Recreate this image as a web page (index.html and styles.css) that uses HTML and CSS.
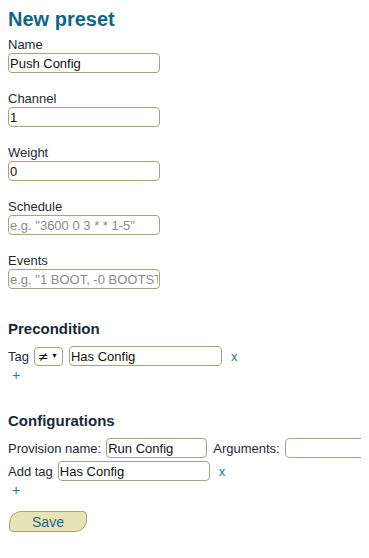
FILE: index.html
```html
<!DOCTYPE html>
<html lang="en">
<head>
  <meta charset="UTF-8">
  <meta name="viewport" content="width=device-width, initial-scale=1.0">
  <title>New preset</title>
  <link rel="stylesheet" href="styles.css">
</head>
<body>

  <h1 class="title">New preset</h1>

  <form class="preset-form">
    <div class="field">
      <label for="name">Name</label>
      <input type="text" id="name" class="text-input" value="Push Config">
    </div>
    <div class="field">
      <label for="channel">Channel</label>
      <input type="text" id="channel" class="text-input" value="1">
    </div>
    <div class="field">
      <label for="weight">Weight</label>
      <input type="text" id="weight" class="text-input" value="0">
    </div>
    <div class="field">
      <label for="schedule">Schedule</label>
      <input type="text" id="schedule" class="text-input" placeholder='e.g. "3600 0 3 * * 1-5"'>
    </div>
    <div class="field">
      <label for="events">Events</label>
      <input type="text" id="events" class="text-input" placeholder='e.g. "1 BOOT, -0 BOOTSTRAP"'>
    </div>

    <!-- Precondition -->
    <h3 class="section-title">Precondition</h3>
    <div class="row">
      <span>Tag</span>
      <span class="select-wrap">
        <select class="op-select">
          <option>&ne;</option>
          <option>=</option>
        </select>
      </span>
      <input type="text" class="text-input tag-input" value="Has Config">
      <a class="link remove">x</a>
    </div>
    <a class="link add">+</a>

    <!-- Configurations -->
    <h3 class="section-title config-title">Configurations</h3>
    <div class="row">
      <span>Provision name:</span>
      <input type="text" class="text-input provision-input" value="Run Config">
      <span>Arguments:</span>
      <input type="text" class="text-input args-input">
    </div>
    <div class="row add-tag-row">
      <span>Add tag</span>
      <input type="text" class="text-input tag-input" value="Has Config">
      <a class="link remove">x</a>
    </div>
    <a class="link add">+</a>

    <button type="button" class="save-btn">Save</button>
  </form>

</body>
</html>
```

FILE: styles.css
```css
html {
  overflow: hidden;
}
body {
  font-family: "Liberation Sans", Arial, sans-serif;
  font-size: 13px;
  color: #1e2a30;
  background-color: #fff;
  margin: 8px;
}
.title {
  font-size: 20px;
  line-height: 23px;
  color: #0f6688;
  margin: 0 0 6px 0;
}
.field {
  margin-bottom: 18px;
}
.field label {
  display: block;
  line-height: 16px;
}
.text-input {
  box-sizing: border-box;
  width: 152px;
  height: 20px;
  padding: 0 1px;
  border: 1px solid #a8a282;
  border-radius: 4px;
  font-family: "Liberation Sans", Arial, sans-serif;
  font-size: 13px;
  color: #111;
  background-color: #fff;
  display: block;
}
.text-input::placeholder {
  color: #8a8a8a;
}
.section-title {
  font-size: 15px;
  line-height: 18px;
  color: #1a2a33;
  margin: 31px 0 8px 0;
}
.config-title {
  margin-top: 29px;
}
.row {
  display: flex;
  align-items: center;
  white-space: nowrap;
  height: 20px;
}
.row .text-input {
  flex-shrink: 0;
}
.select-wrap {
  position: relative;
  margin-left: 5px;
}
.op-select {
  appearance: none;
  -webkit-appearance: none;
  box-sizing: border-box;
  width: 29px;
  height: 19px;
  padding: 0 0 0 3px;
  border: 1px solid #a8a282;
  border-radius: 4px;
  background-color: #fff;
  font-family: "DejaVu Sans", "Liberation Sans", sans-serif;
  font-size: 13px;
  color: #111;
  display: block;
}
.select-wrap::after {
  content: "\25BC";
  position: absolute;
  right: 5px;
  top: 5px;
  font-size: 7px;
  color: #111;
  pointer-events: none;
}
.tag-input {
  margin-left: 6px;
  width: 153px;
}
.link {
  color: #1f78a8;
  cursor: pointer;
}
.remove {
  margin-left: 9px;
}
.add {
  display: block;
  margin: 1px 0 0 4px;
  line-height: 16px;
  width: 10px;
  font-size: 14px;
}
.provision-input {
  width: 101px;
  margin: 0 6px 0 5px;
}
.args-input {
  min-width: 152px;
  margin-left: 5px;
}
.add-tag-row {
  margin-top: 3px;
}
.add-tag-row .tag-input {
  margin-left: 5px;
  width: 152px;
}
.add-tag-row .remove {
  margin-left: 9px;
}
.save-btn {
  display: block;
  margin: 13px 0 0 1px;
  width: 78px;
  height: 21px;
  padding: 0;
  background-color: #e8e3b3;
  border: 1px solid #aaa47c;
  border-radius: 12px 4px 12px 4px;
  color: #1e6b88;
  font-family: "Liberation Sans", Arial, sans-serif;
  font-size: 14px;
  cursor: pointer;
}
```
